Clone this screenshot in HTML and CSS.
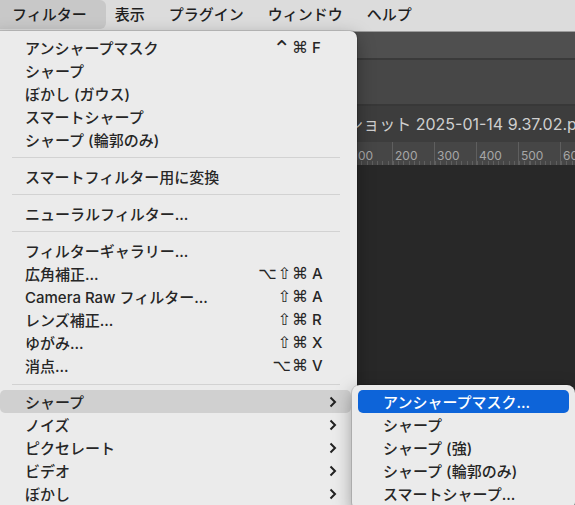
FILE: index.html
```html
<!DOCTYPE html>
<html lang="ja">
<head>
    <meta charset="UTF-8">
    <title>フィルター</title>
    <link rel="stylesheet" href="styles.css">
</head>
<body>
    <!-- Menu bar -->
    <nav class="menubar">
        <span class="menubar-item open">フィルター</span>
        <span class="menubar-item">表示</span>
        <span class="menubar-item">プラグイン</span>
        <span class="menubar-item">ウィンドウ</span>
        <span class="menubar-item">ヘルプ</span>
    </nav>

    <!-- Workspace behind the menus -->
    <div class="toolbar"></div>
    <div class="options"></div>
    <div class="tabs">スクリーンショット 2025-01-14 9.37.02.png</div>
    <div class="ruler">
        <span>100</span><span>200</span><span>300</span>
        <span>400</span><span>500</span><span>600</span>
    </div>
    <div class="canvas"></div>

    <!-- Filter menu -->
    <div class="menu main-menu">
        <div class="menu-row"><span class="label">アンシャープマスク</span><span class="shortcut"><span class="mods"><span class="ctrl">⌃</span>⌘</span><span class="key">F</span></span></div>
        <div class="menu-row"><span class="label">シャープ</span></div>
        <div class="menu-row"><span class="label">ぼかし (ガウス)</span></div>
        <div class="menu-row"><span class="label">スマートシャープ</span></div>
        <div class="menu-row"><span class="label">シャープ (輪郭のみ)</span></div>
        <div class="menu-sep"></div>
        <div class="menu-row"><span class="label">スマートフィルター用に変換</span></div>
        <div class="menu-sep"></div>
        <div class="menu-row"><span class="label">ニューラルフィルター...</span></div>
        <div class="menu-sep"></div>
        <div class="menu-row"><span class="label">フィルターギャラリー...</span></div>
        <div class="menu-row"><span class="label">広角補正...</span><span class="shortcut"><span class="mods">⌥⇧⌘</span><span class="key">A</span></span></div>
        <div class="menu-row"><span class="label">Camera Raw フィルター...</span><span class="shortcut"><span class="mods">⇧⌘</span><span class="key">A</span></span></div>
        <div class="menu-row"><span class="label">レンズ補正...</span><span class="shortcut"><span class="mods">⇧⌘</span><span class="key">R</span></span></div>
        <div class="menu-row"><span class="label">ゆがみ...</span><span class="shortcut"><span class="mods">⇧⌘</span><span class="key">X</span></span></div>
        <div class="menu-row"><span class="label">消点...</span><span class="shortcut"><span class="mods">⌥⌘</span><span class="key">V</span></span></div>
        <div class="menu-sep last"></div>
        <div class="menu-row hover"><span class="label">シャープ</span><svg class="chev" width="8" height="12" viewBox="0 0 8 12"><path d="M1.5 1.5L6 6l-4.5 4.5"/></svg></div>
        <div class="menu-row"><span class="label">ノイズ</span><svg class="chev" width="8" height="12" viewBox="0 0 8 12"><path d="M1.5 1.5L6 6l-4.5 4.5"/></svg></div>
        <div class="menu-row"><span class="label">ピクセレート</span><svg class="chev" width="8" height="12" viewBox="0 0 8 12"><path d="M1.5 1.5L6 6l-4.5 4.5"/></svg></div>
        <div class="menu-row"><span class="label">ビデオ</span><svg class="chev" width="8" height="12" viewBox="0 0 8 12"><path d="M1.5 1.5L6 6l-4.5 4.5"/></svg></div>
        <div class="menu-row"><span class="label">ぼかし</span><svg class="chev" width="8" height="12" viewBox="0 0 8 12"><path d="M1.5 1.5L6 6l-4.5 4.5"/></svg></div>
    </div>

    <!-- Sharpen submenu -->
    <div class="menu sub-menu">
        <div class="menu-row active"><span class="label">アンシャープマスク...</span></div>
        <div class="menu-row"><span class="label">シャープ</span></div>
        <div class="menu-row"><span class="label">シャープ (強)</span></div>
        <div class="menu-row"><span class="label">シャープ (輪郭のみ)</span></div>
        <div class="menu-row"><span class="label">スマートシャープ...</span></div>
    </div>
</body>
</html>
```

FILE: styles.css
```css
body {
    margin: 0;
    width: 575px;
    height: 505px;
    overflow: hidden;
    position: relative;
    background: #282828;
    font-family: Inter, "Noto Sans CJK JP", sans-serif;
    font-size: 15px;
    color: #262626;
}

/* menu bar */
.menubar {
    display: flex;
    height: 31px;
    margin-left: -6px;
    background: #dcdcdc;
    border-bottom: 1px solid #9c9c9c;
    color: #1f1f1f;
    font-weight: 500;
}
.menubar-item {
    height: 29px;
    line-height: 29px;
    padding: 0 12px;
}
.menubar-item.open {
    padding: 0 19px 0 18px;
    margin-right: -3px;
    background: #c8c8c8;
    border-radius: 6px;
}

/* workspace */
.toolbar {
    height: 26px;
    background: #4f4f4f;
    border-bottom: 2px solid #3a3a3a;
}
.options {
    height: 44px;
    background: #474747;
    border-bottom: 2px solid #383838;
}
.tabs {
    height: 36px;
    line-height: 36px;
    padding-left: 268px;
    background: #3d3d3d;
    color: #cfcfcf;
    font-size: 16px;
    white-space: nowrap;
}
.ruler {
    display: flex;
    height: 23px;
    padding-left: 350px;
    background: #464646;
}
.ruler span {
    flex: 0 0 42px;
    box-sizing: border-box;
    padding: 6px 0 0 2px;
    border-left: 1px solid #5f5f5f;
    font-size: 12px;
    color: #a6a6a6;
    background: repeating-linear-gradient(to right, #5f5f5f 0 1px, transparent 1px 5.25px) bottom / 100% 4px no-repeat;
}
.canvas {
    height: 340px;
    background: #282828;
}

/* menus */
.menu {
    position: absolute;
    padding: 5px 6px;
    background: #ebebeb;
    font-weight: 500;
    box-shadow: 0 0 0 1px rgba(0,0,0,0.12), 0 6px 18px rgba(0,0,0,0.35);
}
.main-menu {
    left: -6px;
    top: 31px;
    width: 351px;
    border-radius: 0 7px 7px 7px;
}
.sub-menu {
    left: 352px;
    top: 385px;
    width: 211px;
    padding-top: 5px;
    border-radius: 8px;
}
.menu-row {
    display: flex;
    align-items: center;
    height: 23px;
    padding: 0 14px 0 25px;
    border-radius: 5px;
    white-space: nowrap;
}
.menu-row .label { flex: 1; }
.menu-row.hover { background: #d0d0d0; }
.menu-row.active {
    background: #0d64d9;
    color: #fff;
}
.shortcut {
    display: flex;
    align-items: center;
    margin-right: 14px;
}
.mods {
    font-family: "DejaVu Sans", sans-serif;
    font-size: 16px;
    letter-spacing: 1px;
}
.ctrl {
    display: inline-block;
    font-size: 22px;
    line-height: 16px;
    vertical-align: top;
    margin-top: 3px;
}
.key {
    width: 11px;
    margin-left: 3px;
}
.chev {
    fill: none;
    stroke: #222;
    stroke-width: 2;
}
.menu-sep {
    height: 1px;
    margin: 6px 11px 7px 12px;
    background: #d2d2d2;
}
.menu-sep.last { margin: 7px 11px 5px 12px; }
```
